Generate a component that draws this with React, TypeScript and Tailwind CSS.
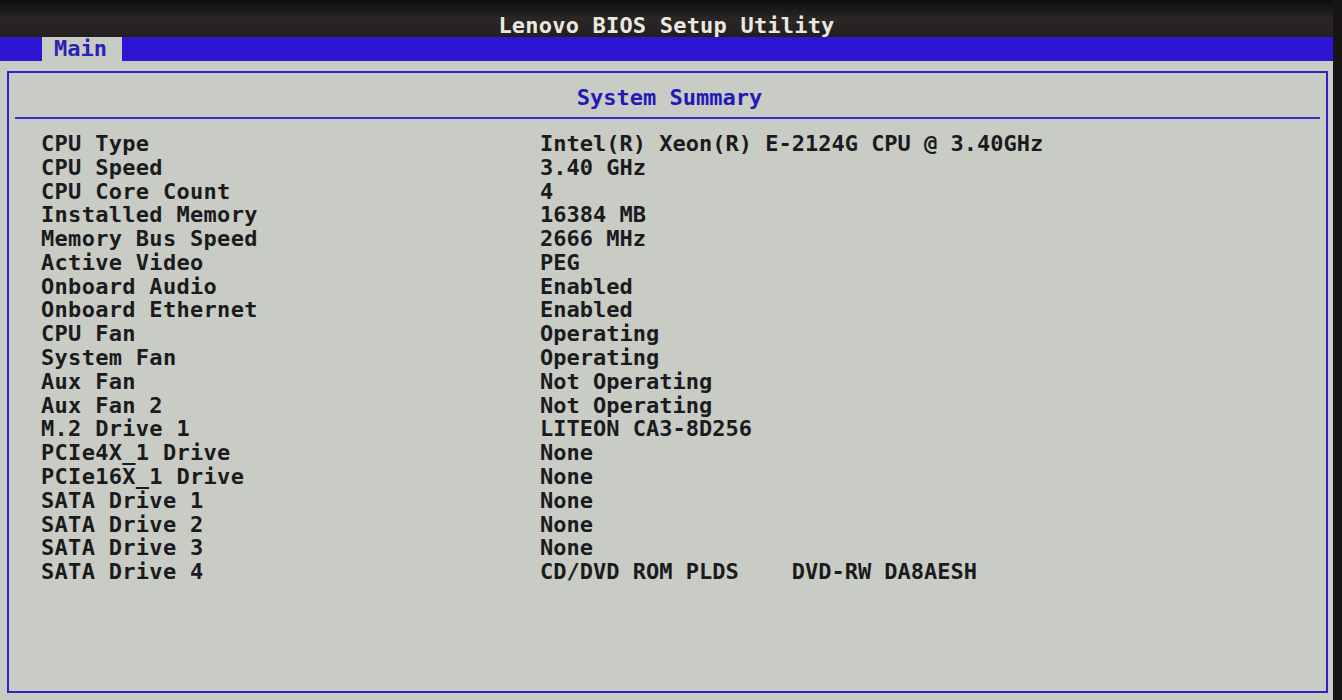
import React from "react";

const rows: [string, string][] = [
  ["CPU Type", "Intel(R) Xeon(R) E-2124G CPU @ 3.40GHz"],
  ["CPU Speed", "3.40 GHz"],
  ["CPU Core Count", "4"],
  ["Installed Memory", "16384 MB"],
  ["Memory Bus Speed", "2666 MHz"],
  ["Active Video", "PEG"],
  ["Onboard Audio", "Enabled"],
  ["Onboard Ethernet", "Enabled"],
  ["CPU Fan", "Operating"],
  ["System Fan", "Operating"],
  ["Aux Fan", "Not Operating"],
  ["Aux Fan 2", "Not Operating"],
  ["M.2 Drive 1", "LITEON CA3-8D256"],
  ["PCIe4X_1 Drive", "None"],
  ["PCIe16X_1 Drive", "None"],
  ["SATA Drive 1", "None"],
  ["SATA Drive 2", "None"],
  ["SATA Drive 3", "None"],
  ["SATA Drive 4", "CD/DVD ROM PLDS    DVD-RW DA8AESH"],
];

export default function App() {
  return (
    <div
      className="w-[1342px] h-[700px] flex bg-[#141212] overflow-hidden"
      style={{ fontFamily: '"DejaVu Sans Mono", "Liberation Mono", monospace' }}
    >
      <div className="w-[1333px] h-full flex flex-col">
        <div className="h-[37px] flex justify-center pt-[15px] bg-gradient-to-b from-[#0e0c0c] via-[#2a2626] to-[#231f1f]">
          <span className="text-[22px] leading-[22px] font-bold text-[#ebe8df] tracking-[0.2px]">
            Lenovo BIOS Setup Utility
          </span>
        </div>
        <div className="h-[24px] flex bg-[#2c16d4]">
          <div className="ml-[42px] w-[80px] h-full bg-[#c9cbc5] flex items-center pl-[12px]">
            <span className="text-[22px] leading-[22px] font-bold text-[#2a22b4]">Main</span>
          </div>
        </div>
        <div className="flex-1 bg-[#c9cbc5] pl-[7px] pr-[5px] pt-[10px] pb-[7px] flex">
          <div className="flex-1 border-2 border-[#3024c0] flex flex-col">
            <div className="mx-[6px] h-[46px] pt-[5px] border-b-2 border-[#3a2ec4] flex items-center justify-center">
              <span className="text-[22px] leading-[24px] font-bold text-[#2318b8] ml-[4px]">
                System Summary
              </span>
            </div>
            <div className="pl-[32px] pt-[13px] flex flex-col">
              {rows.map(([k, v]) => (
                <div key={k} className="flex h-[23.8px] items-center">
                  <span className="w-[499px] text-[22px] leading-[24px] font-bold text-[#1b1b1d] whitespace-pre tracking-[0.3px]">
                    {k}
                  </span>
                  <span className="text-[22px] leading-[24px] font-bold text-[#1b1b1d] whitespace-pre">
                    {v}
                  </span>
                </div>
              ))}
            </div>
          </div>
        </div>
      </div>
      <div className="flex-1 bg-[#161414]" />
    </div>
  );
}
